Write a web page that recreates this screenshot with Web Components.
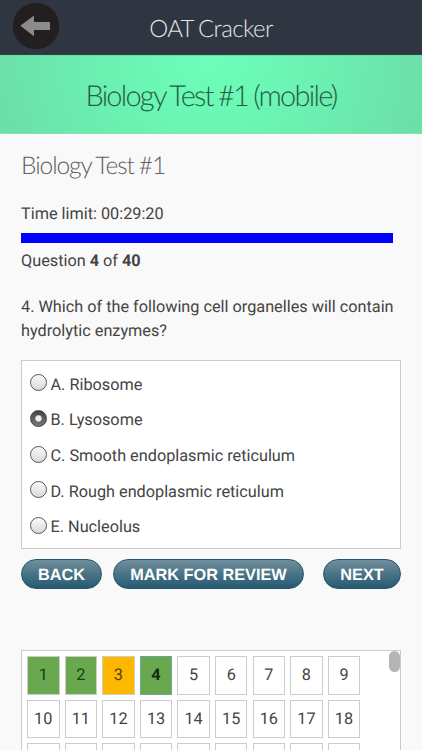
<!DOCTYPE html>
<html lang="en"><head><meta charset="utf-8"><title>OAT Cracker</title>
<style>html,body{margin:0;height:750px;overflow:hidden;background:#f9f9f9}</style></head>
<body><quiz-app></quiz-app>
<script>
const define = (name, html, setup) => customElements.define(name, class extends HTMLElement {
  connectedCallback() {
    if (this.shadowRoot) return;
    this.attachShadow({mode: 'open'}).innerHTML = html;
    if (setup) setup(this, this.shadowRoot);
  }
});

define('app-bar', `<style>
:host{display:grid;grid-template-columns:72px 1fr 72px;height:55px;box-sizing:border-box;background:#2f3641;border-bottom:1px solid #29483f;color:#e4e6ea;align-items:start}
svg{display:block;margin:2px 0 0 12px}
h1{margin:0;font:300 24px/58px Lato,sans-serif;letter-spacing:-.6px;word-spacing:-1px;text-align:center;white-space:nowrap}
</style><svg width="48" height="48" viewBox="0 0 48 48"><circle cx="24" cy="24" r="23.2" fill="#231f20"/><path d="M8.3 23.8 22 13.5V20H38V28H22V34.2Z" fill="#8b8b8b"/></svg><h1><slot></slot></h1>`);

define('hero-banner', `<style>
:host{display:block;height:79px;box-sizing:border-box;background:radial-gradient(circle 265px at 50% 0,#6dffb9 0,#6bf1b2 40%,#6ce0a9 80%,#6cdca7 100%);border-top:1px solid #70d9a7;border-bottom:1px solid #83e3b5;text-align:center}
h2{margin:0;font:300 29px/80px Lato,sans-serif;letter-spacing:-1.75px;word-spacing:-1px;color:#245f43;white-space:nowrap}
</style><h2><slot></slot></h2>`);

define('quiz-status', `<style>
:host{display:block}
h3{margin:0;font:300 24.5px/30px Lato,sans-serif;letter-spacing:-1.05px;word-spacing:-.7px;color:#606060}
p{margin:0;line-height:24px}
.time{margin-top:21px}
.bar{width:372px;height:10px;margin:7px 0 6px;background:#00f}
</style><h3>Biology Test #1</h3><p class="time">Time limit: 00:29:20</p><div class="bar"></div><p>Question <b>4</b> of <b>40</b></p>`);

define('answer-option', `<style>
:host{display:flex;height:35.65px;align-items:center;white-space:nowrap}
i{box-sizing:border-box;width:17px;height:17px;margin:-2px 4px 0 7.5px;border:1px solid #555;border-radius:50%;background:linear-gradient(#fafafa,#d9d9d9)}
span{padding-top:2px}
:host([checked]) i{border-color:#444;background:radial-gradient(circle,#eee 0 2.6px,#888 3.4px,transparent 4px),linear-gradient(#444,#777)}
</style><i></i><span><slot></slot></span>`);

define('answer-list', `<style>
:host{display:block;box-sizing:border-box;width:380px;height:189px;padding-top:5px;background:#fff;border:1px solid #ccc}
</style><slot></slot>`);

define('pill-button', `<style>
:host{display:flex;box-sizing:border-box;height:30px;padding-top:1px;align-items:center;justify-content:center;border:1px solid #285468;border-radius:15px;background:linear-gradient(#718f9b,#4b7587 48%,#265a72);color:#fff;font:bold 16.3px/28px "Liberation Sans",sans-serif;letter-spacing:0;white-space:nowrap}
</style><slot></slot>`);

define('question-cell', `<style>
:host{display:flex;box-sizing:border-box;width:32.5px;height:38.5px;align-items:center;justify-content:center;border:1px solid #ccc;background:#fff;color:#444}
:host([state=answered]){background:#6aa84f;color:#203b17}
:host([state=review]){background:#ffb800;color:#54400c}
:host([current]){border-color:#6aa79b;font-weight:bold;color:#142b0d}
</style><slot></slot>`);

define('question-grid', `<style>
:host{display:flex;justify-content:space-between;align-items:flex-start;box-sizing:border-box;width:380px;height:130px;overflow:hidden;background:#fff;border:1px solid #ccc}
.cells{display:grid;grid-template-columns:repeat(9,32.5px);gap:5px 5.1px;padding:5px}
.thumb{width:11px;height:21px;border-radius:6px;background:#b5b5b5}
</style><div class="cells"></div><div class="thumb"></div>`, (host, root) => {
  const states = {1: 'answered', 2: 'answered', 3: 'review', 4: 'answered'};
  root.querySelector('.cells').innerHTML = Array.from({length: 27}, (_, i) => {
    const n = i + 1;
    return `<question-cell ${states[n] ? `state="${states[n]}"` : ''} ${n === 4 ? 'current' : ''}>${n <= 18 ? n : ''}</question-cell>`;
  }).join('');
});

define('quiz-app', `<style>
:host{display:block;width:422px;height:750px;overflow:hidden;background:#f9f9f9;color:#444;font:16.26px/24px Roboto,sans-serif;letter-spacing:0;text-rendering:geometricPrecision}
main{padding:17px 0 0 21px}
.question{margin:22px 0 17px;line-height:24px;white-space:nowrap}
nav{display:grid;grid-template-columns:81px 191px 78px;column-gap:11px;width:380px;margin:10px 0 61px}
nav :last-child{margin-left:8px;width:78px}
</style>
<app-bar>OAT Cracker</app-bar><hero-banner>Biology Test #1 (mobile)</hero-banner>
<main><quiz-status></quiz-status>
<p class="question">4. Which of the following cell organelles will contain<br>hydrolytic enzymes?</p>
<answer-list><answer-option>A. Ribosome</answer-option><answer-option checked>B. Lysosome</answer-option><answer-option>C. Smooth endoplasmic reticulum</answer-option><answer-option>D. Rough endoplasmic reticulum</answer-option><answer-option>E. Nucleolus</answer-option></answer-list>
<nav><pill-button>BACK</pill-button><pill-button>MARK FOR REVIEW</pill-button><pill-button>NEXT</pill-button></nav>
<question-grid></question-grid></main>`);
</script></body></html>
